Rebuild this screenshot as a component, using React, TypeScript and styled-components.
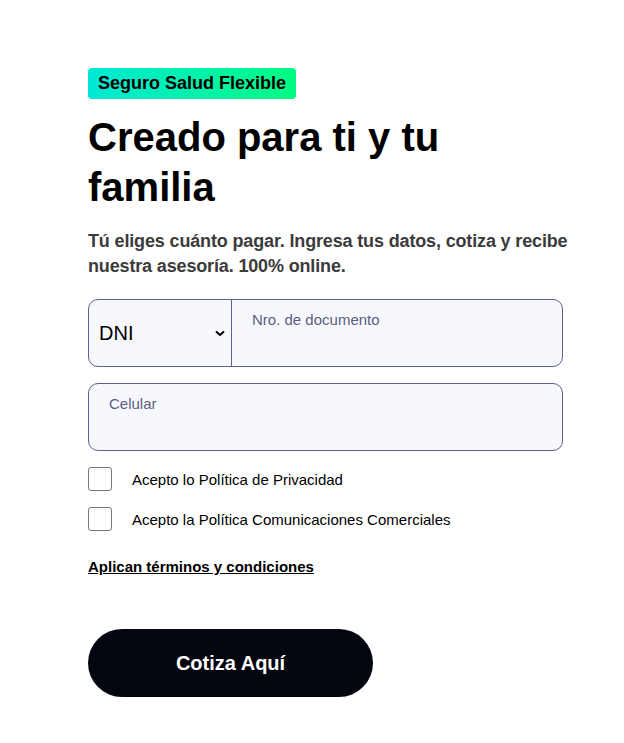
import React from "react";
import styled, { createGlobalStyle } from "styled-components";

const Global = createGlobalStyle`
  html, body { margin: 0; padding: 0; background: #ffffff; }
  body { font-family: "Liberation Sans", Arial, sans-serif; color: #000; }
  * { box-sizing: border-box; }
`;

const Page = styled.main`
  padding: 68px 61px 40px 88px;
  display: flex;
  flex-direction: column;
  align-items: flex-start;
`;

const Badge = styled.span`
  display: inline-flex;
  align-items: center;
  height: 31px;
  padding: 0 10px;
  border-radius: 4px;
  background: linear-gradient(90deg, #00e8d6 0%, #00fb82 100%);
  font-weight: 700;
  font-size: 18px;
  color: #000;
`;

const Title = styled.h1`
  margin: 13px 0 0;
  max-width: 400px;
  font-size: 40px;
  line-height: 50px;
  font-weight: 700;
  color: #000;
`;

const Lead = styled.p`
  margin: 17px 0 0;
  width: 496px;
  font-size: 18px;
  line-height: 25px;
  letter-spacing: -0.15px;
  font-weight: 700;
  color: #3b3b3b;
`;

const Form = styled.form`
  width: 475px;
  margin-top: 20px;
  display: flex;
  flex-direction: column;
`;

const FieldBox = styled.div`
  display: flex;
  height: 68px;
  border: 1px solid #5d6190;
  border-radius: 10px;
  background: #f7f8fe;
  overflow: hidden;
  & + & { margin-top: 16px; }
`;

const SelectPart = styled.div`
  width: 143px;
  flex: none;
  display: flex;
  align-items: center;
  justify-content: space-between;
  padding: 0 3px 0 10px;
  border-right: 1px solid #5d6190;
  font-size: 20px;
  color: #000;
`;

const InputPart = styled.label<{ $pad: number }>`
  flex: 1;
  padding: 11px 0 0 ${(p) => p.$pad}px;
  font-size: 15px;
  line-height: 17px;
  color: #5b5e7f;
`;

const CheckRow = styled.label`
  display: flex;
  align-items: center;
  gap: 20px;
  height: 24px;
  font-size: 15px;
  color: #000;
  margin-top: 16px;
  & + & { margin-top: 16px; }
`;

const Box = styled.span`
  width: 24px;
  height: 24px;
  border: 1px solid #767676;
  border-radius: 3px;
  background: #fff;
  flex: none;
`;

const Terms = styled.a`
  margin-top: 27px;
  font-size: 15px;
  font-weight: 700;
  color: #000;
  text-decoration: underline;
  align-self: flex-start;
`;

const Submit = styled.button`
  margin-top: 54px;
  width: 285px;
  height: 68px;
  border: none;
  border-radius: 34px;
  background: #03060f;
  color: #fff;
  font-family: inherit;
  font-weight: 700;
  font-size: 20px;
`;

export default function App() {
  return (
    <>
      <Global />
      <Page>
        <Badge>Seguro Salud Flexible</Badge>
        <Title>Creado para ti y tu familia</Title>
        <Lead>
          Tú eliges cuánto pagar. Ingresa tus datos, cotiza y recibe nuestra asesoría. 100% online.
        </Lead>
        <Form onSubmit={(e) => e.preventDefault()}>
          <FieldBox>
            <SelectPart>
              <span>DNI</span>
              <svg width="16" height="16" viewBox="0 0 16 16" aria-hidden="true">
                <path d="M4 6.5 L8 10 L12 6.5" fill="none" stroke="#000" strokeWidth="2" />
              </svg>
            </SelectPart>
            <InputPart $pad={20}>Nro. de documento</InputPart>
          </FieldBox>
          <FieldBox>
            <InputPart $pad={20}>Celular</InputPart>
          </FieldBox>
          <CheckRow>
            <Box />
            Acepto lo Política de Privacidad
          </CheckRow>
          <CheckRow>
            <Box />
            Acepto la Política Comunicaciones Comerciales
          </CheckRow>
          <Terms href="#">Aplican términos y condiciones</Terms>
          <Submit type="submit">Cotiza Aquí</Submit>
        </Form>
      </Page>
    </>
  );
}
